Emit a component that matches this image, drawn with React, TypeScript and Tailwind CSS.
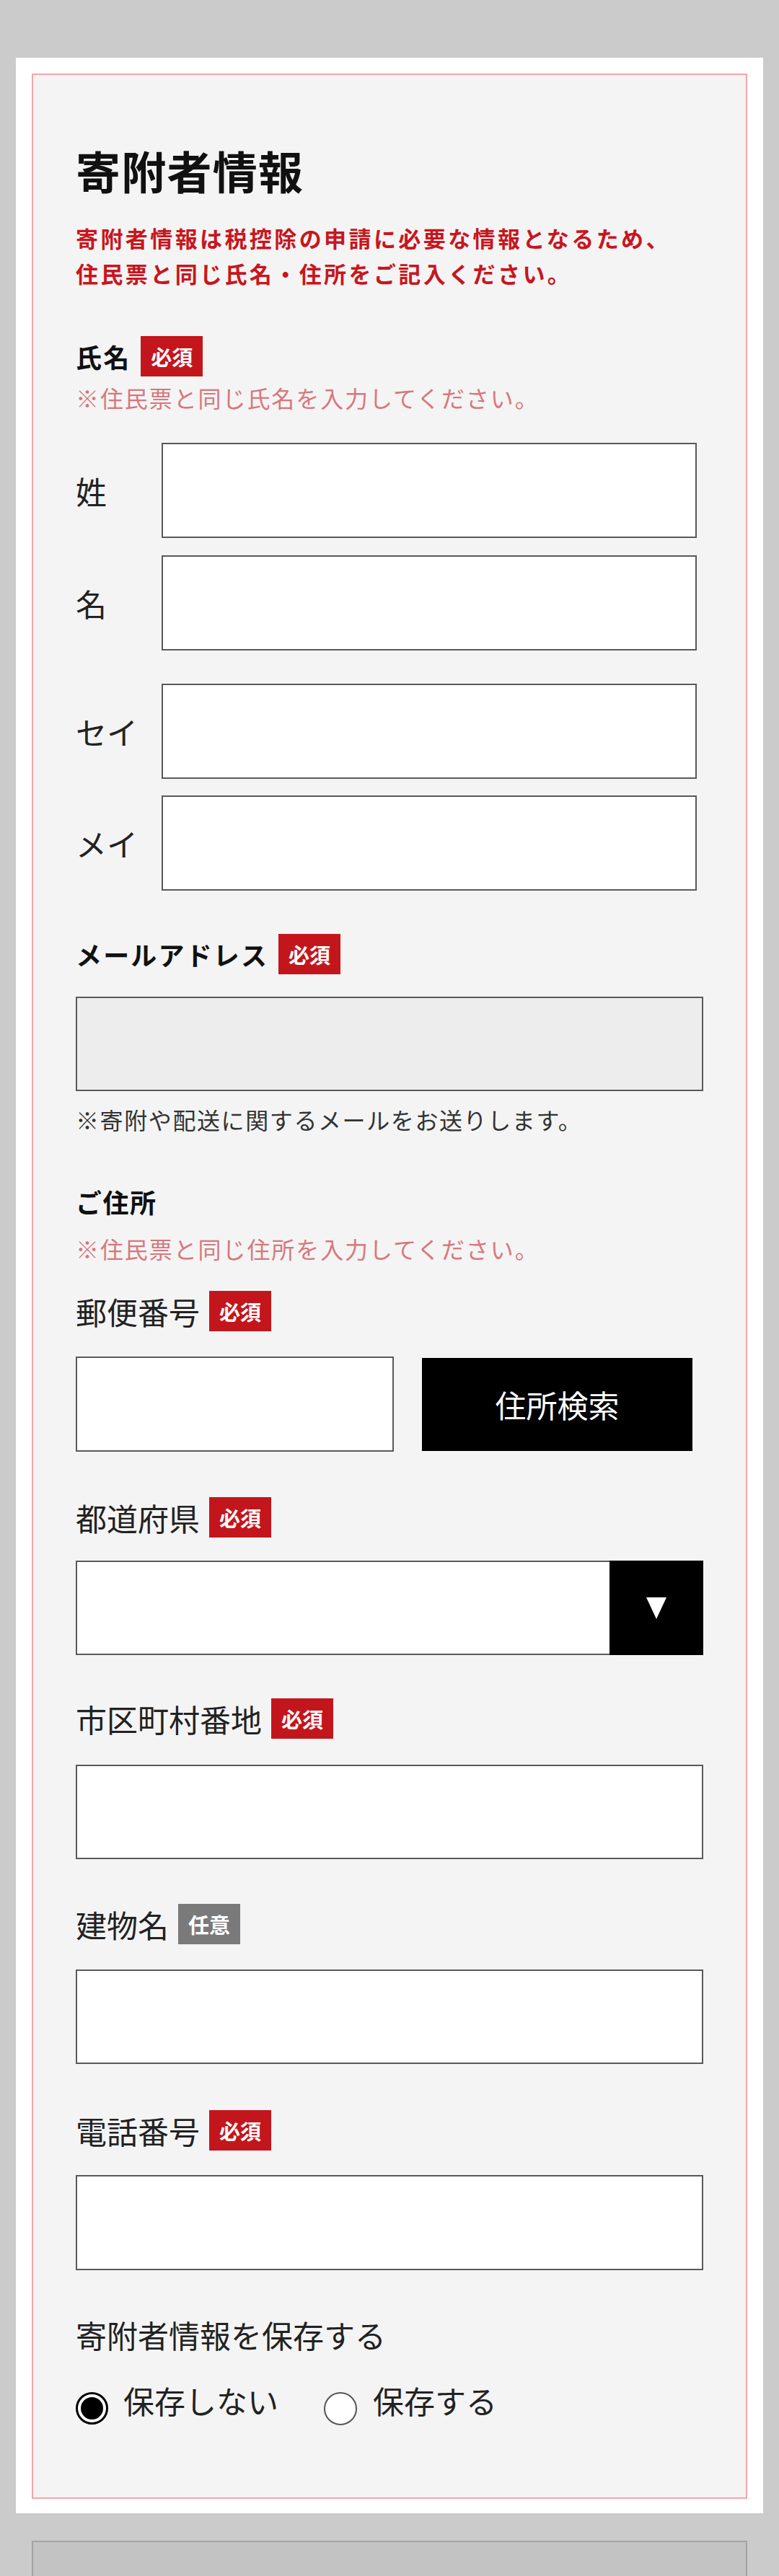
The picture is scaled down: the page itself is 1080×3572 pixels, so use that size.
function Badge({ optional = false }: { optional?: boolean }) {
  return (
    <span
      className={`inline-flex h-[56px] w-[86px] shrink-0 items-center justify-center text-[29px] font-bold leading-none text-white ${
        optional ? 'bg-[#7a7a7a]' : 'bg-[#c3161c]'
      }`}
    >
      {optional ? '任意' : '必須'}
    </span>
  )
}

function FieldLabel({ label, optional = false, className = '' }: { label: string; optional?: boolean; className?: string }) {
  return (
    <div className={`flex h-[56px] items-center gap-[13px] ${className}`}>
      <span className="text-[43px] leading-[56px] text-[#222]">{label}</span>
      <Badge optional={optional} />
    </div>
  )
}

function BoldLabel({ label, className = '' }: { label: string; className?: string }) {
  return (
    <div className={`flex h-[56px] items-center gap-[14px] ${className}`}>
      <span className="text-[36px] font-bold leading-[56px] tracking-[0.06em] text-[#111]">{label}</span>
      <Badge />
    </div>
  )
}

function TextBox({ className = '', gray = false }: { className?: string; gray?: boolean }) {
  return (
    <input
      type="text"
      className={`block h-[131px] border-2 border-[#595959] outline-none ${gray ? 'bg-[#ededed]' : 'bg-white'} ${className}`}
    />
  )
}

function NameRow({ label, className = '' }: { label: string; className?: string }) {
  return (
    <div className={`flex items-center ${className}`}>
      <span className="w-[119px] text-[43px] leading-[50px] text-[#222]">{label}</span>
      <TextBox className="h-[132px] w-[742px]" />
    </div>
  )
}

export default function App() {
  return (
    <div className="h-[3572px] overflow-hidden bg-[#cbcbcb] px-[22px] pt-[80px] font-['Noto_Sans_CJK_JP','Noto_Sans',sans-serif]">
      {/* card */}
      <div className="bg-white p-[22px] pb-[20px]">
        <div className="border-2 border-[#f3a6ab] bg-[#f4f4f4] px-[59px] pb-[100px] pt-[101px]">
          <h2 className="text-[62px] font-bold leading-[62px] tracking-[0.02em] text-[#111]">寄附者情報</h2>
          <p className="mt-[38px] text-[31px] font-bold leading-[49px] tracking-[0.11em] text-[#c8161e]">
            寄附者情報は税控除の申請に必要な情報となるため、
            <br />
            住民票と同じ氏名・住所をご記入ください。
          </p>

          {/* 氏名 */}
          <BoldLabel label="氏名" className="mt-[63px]" />
          <p className="mt-[9px] text-[32px] leading-[40px] tracking-[0.06em] text-[#d7777d]">
            ※住民票と同じ氏名を入力してください。
          </p>
          <div className="mt-[43px] flex flex-col gap-[24px]">
            <NameRow label="姓" />
            <NameRow label="名" />
          </div>
          <div className="mt-[46px] flex flex-col gap-[23px]">
            <NameRow label="セイ" />
            <NameRow label="メイ" />
          </div>

          {/* メール */}
          <BoldLabel label="メールアドレス" className="mt-[60px]" />
          <TextBox gray className="mt-[31px] w-full" />
          <p className="mt-[19px] text-[32px] leading-[40px] tracking-[0.05em] text-[#333]">
            ※寄附や配送に関するメールをお送りします。
          </p>

          {/* 住所 */}
          <h3 className="mt-[72px] text-[36px] font-bold leading-[44px] tracking-[0.04em] text-[#111]">ご住所</h3>
          <p className="mt-[23px] text-[32px] leading-[40px] tracking-[0.06em] text-[#d7777d]">
            ※住民票と同じ住所を入力してください。
          </p>

          <FieldLabel label="郵便番号" className="mt-[39px]" />
          <div className="mt-[35px] flex items-center gap-[39px]">
            <TextBox className="h-[132px] w-[441px]" />
            <button
              type="button"
              className="h-[129px] w-[375px] bg-black text-[43px] leading-none text-white"
            >
              住所検索
            </button>
          </div>

          <FieldLabel label="都道府県" className="mt-[63px]" />
          <div className="mt-[32px] flex h-[131px] w-full border-2 border-[#595959] bg-white">
            <div className="flex-1" />
            <div className="-my-[2px] -mr-[2px] flex w-[130px] items-center justify-center bg-black">
              <svg width="28" height="30" viewBox="0 0 28 30" aria-hidden="true">
                <polygon points="0,0 28,0 14,30" fill="#fff" />
              </svg>
            </div>
          </div>

          <FieldLabel label="市区町村番地" className="mt-[60px]" />
          <TextBox className="mt-[36px] w-full" />

          <FieldLabel label="建物名" optional className="mt-[62px]" />
          <TextBox className="mt-[35px] w-full" />

          <FieldLabel label="電話番号" className="mt-[64px]" />
          <TextBox className="mt-[34px] h-[132px] w-full" />

          {/* 保存 */}
          <p className="mt-[64px] text-[43px] leading-[50px] text-[#222]">寄附者情報を保存する</p>
          <div className="mt-[41px] flex items-start">
            <span className="mt-[14px] flex h-[45px] w-[45px] items-center justify-center rounded-full border-[3px] border-black bg-white">
              <span className="h-[31px] w-[31px] rounded-full bg-black" />
            </span>
            <span className="ml-[21px] text-[43px] leading-[50px] text-[#222]">保存しない</span>
            <span className="ml-[63px] mt-[14px] h-[46px] w-[46px] rounded-full border-2 border-[#555] bg-white" />
            <span className="ml-[22px] text-[43px] leading-[50px] text-[#222]">保存する</span>
          </div>
        </div>
      </div>

      {/* next section */}
      <div className="mx-[22px] mt-[38px] h-[200px] border-2 border-[#a3a3a3] bg-[#c3c3c3]" />
    </div>
  )
}
